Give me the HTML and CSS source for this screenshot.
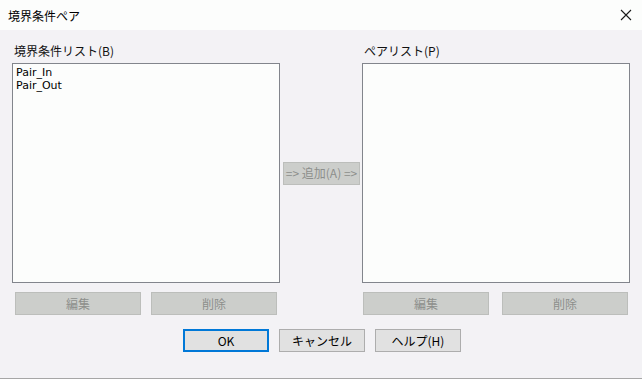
FILE: index.html
```html
<!DOCTYPE html>
<html lang="ja">
<head>
    <meta charset="UTF-8">
    <title>境界条件ペア</title>
    <link rel="stylesheet" href="styles.css">
</head>
<body>
    <div class="dialog">
        <div class="titlebar">
            <span class="title">境界条件ペア</span>
            <svg class="close" width="12" height="12" viewBox="0 0 12 12">
                <path d="M1 1 L11 11 M11 1 L1 11" stroke="#1a1a1a" stroke-width="1.1" fill="none"/>
            </svg>
        </div>

        <div class="content">
            <div class="lists">
                <div class="column left">
                    <div class="label">境界条件リスト(B)</div>
                    <div class="listbox">
                        <div class="item">Pair_In</div>
                        <div class="item">Pair_Out</div>
                    </div>
                    <div class="btn-row">
                        <button class="btn disabled">編集</button>
                        <button class="btn disabled">削除</button>
                    </div>
                </div>

                <div class="middle">
                    <button class="btn disabled add">=&gt; 追加(A) =&gt;</button>
                </div>

                <div class="column right">
                    <div class="label">ペアリスト(P)</div>
                    <div class="listbox"></div>
                    <div class="btn-row">
                        <button class="btn disabled">編集</button>
                        <button class="btn disabled">削除</button>
                    </div>
                </div>
            </div>

            <div class="actions">
                <button class="btn primary">OK</button>
                <button class="btn">キャンセル</button>
                <button class="btn">ヘルプ(H)</button>
            </div>
        </div>
    </div>
</body>
</html>
```

FILE: styles.css
```css
body {
    margin: 0;
    font-family: "Liberation Sans", "Noto Sans CJK JP", sans-serif;
    font-size: 12px;
    color: #000;
    background-color: #f3f2f5;
}
.dialog {
    width: 642px;
    height: 379px;
    box-sizing: border-box;
    border-bottom: 1px solid #a6a6a6;
    background-color: #f3f2f5;
}
.titlebar {
    height: 30px;
    background: #fcfdfc;
    display: flex;
    align-items: center;
    justify-content: space-between;
    padding: 0 10px 0 8px;
}
.title {
    font-family: "Noto Sans CJK JP", sans-serif;
    font-size: 12px;
    color: #000;
}
.close {
    margin-top: -1px;
}
.content {
    padding: 12px 12px 0 12px;
}
.lists {
    display: flex;
}
.column {
    width: 268px;
    display: flex;
    flex-direction: column;
}
.label {
    font-family: "Noto Sans CJK JP", sans-serif;
    height: 18px;
    line-height: 18px;
    padding-left: 2px;
    margin-bottom: 3px;
    color: #111;
}
.listbox {
    height: 220px;
    box-sizing: border-box;
    border: 1px solid #82858c;
    background: #fcfdfc;
    padding: 2px 3px;
}
.item {
    font-family: "DejaVu Sans", sans-serif;
    font-size: 11px;
    line-height: 13px;
}
.btn-row {
    display: flex;
    justify-content: space-between;
    margin-top: 9px;
}
.left .btn-row {
    padding: 0 3px;
}
.right .btn-row {
    padding: 0 2px 0 1px;
}
.btn {
    font-family: "Noto Sans CJK JP", sans-serif;
    font-size: 12px;
    height: 23px;
    padding: 0;
    background: #e1e1e1;
    border: 1px solid #adadad;
    color: #000;
    box-sizing: border-box;
    line-height: 20px;
}
.btn-row .btn {
    width: 126px;
}
.btn.disabled {
    background: #cccecb;
    border-color: #bcbebb;
    color: #8d8e8c;
}
.middle {
    width: 82px;
    display: flex;
    align-items: center;
    justify-content: center;
    padding-top: 21px;
    padding-bottom: 32px;
}
.add {
    width: 77px;
    margin-left: 1px;
}
.actions {
    display: flex;
    justify-content: center;
    gap: 10px;
    margin-top: 14px;
    padding-left: 2px;
}
.actions .btn {
    width: 86px;
}
.primary {
    border: 2px solid #0078d7;
}
```
